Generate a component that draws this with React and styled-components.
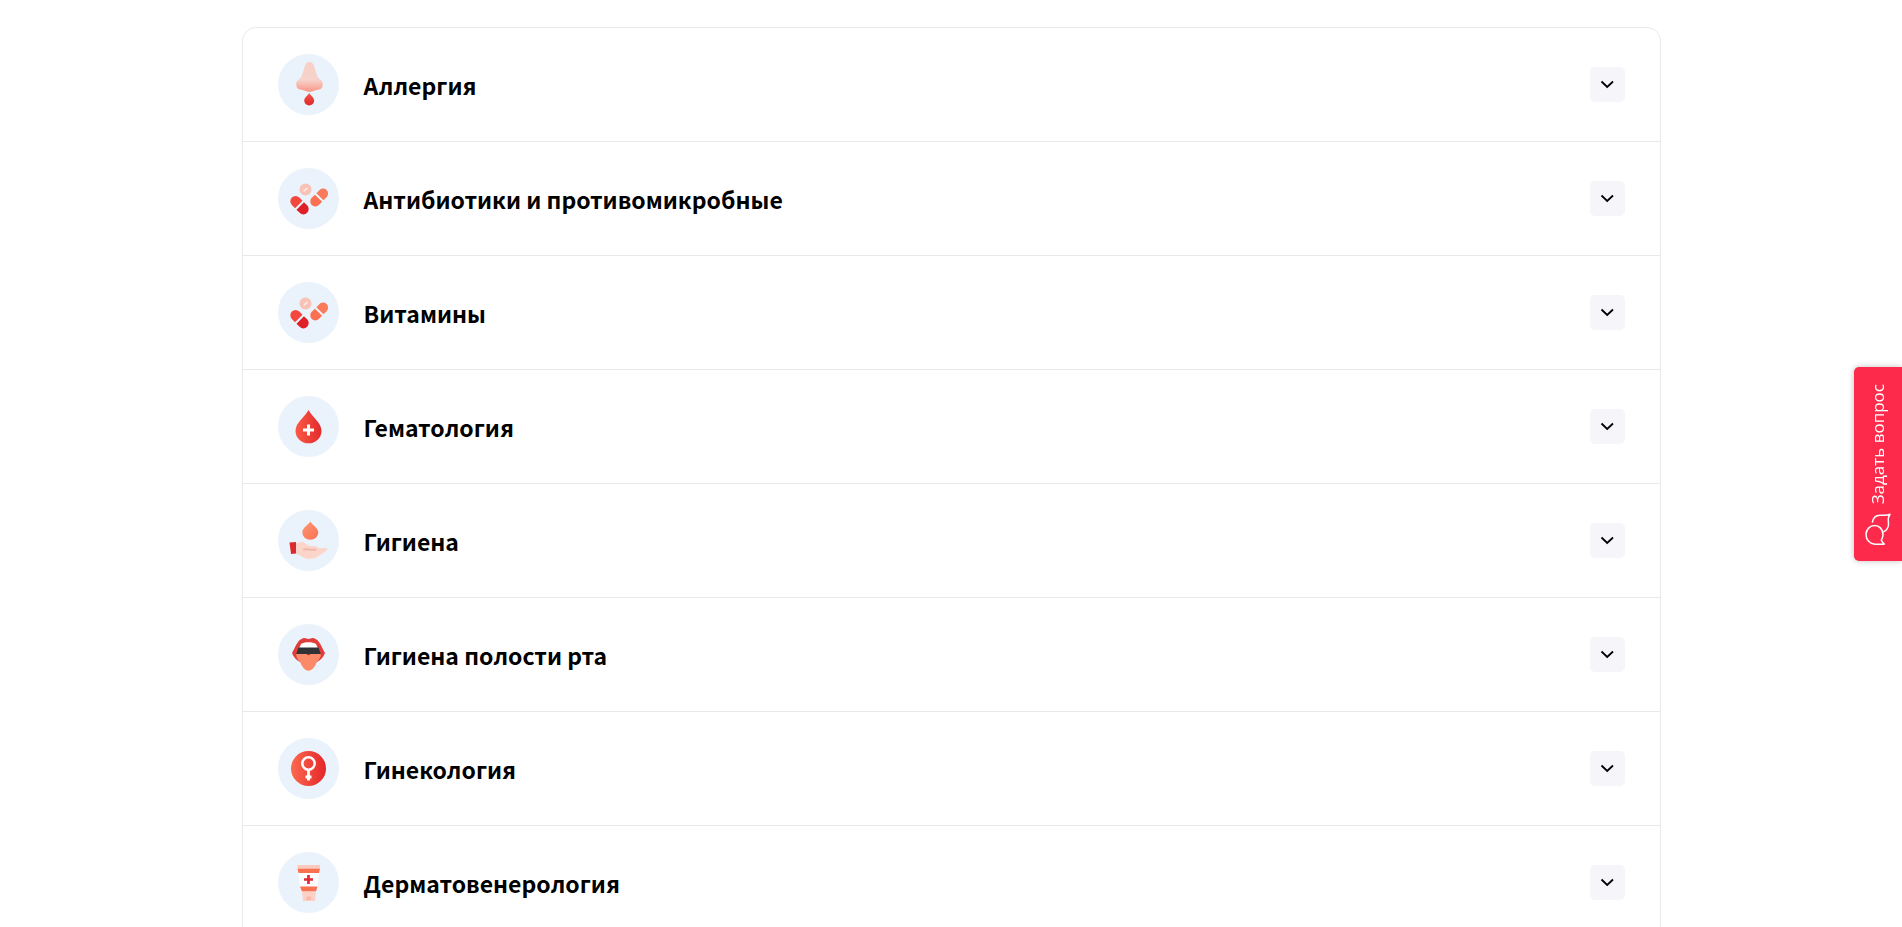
import { useState } from "react";
import styled, { createGlobalStyle } from "styled-components";

function AllergyIcon() {
  return (
    <svg viewBox="0 0 77 77" aria-hidden="true">
      <defs>
        <linearGradient id="nose" x1="0" y1="0" x2="0" y2="1">
          <stop offset="0" stopColor="#f8cfc6" />
          <stop offset="0.6" stopColor="#f6d3cb" />
          <stop offset="1" stopColor="#fb9484" />
        </linearGradient>
        <linearGradient id="noseDrop" x1="0" y1="0" x2="0" y2="1">
          <stop offset="0" stopColor="#f5524a" />
          <stop offset="1" stopColor="#dc2a2a" />
        </linearGradient>
      </defs>
      <path
        fill="url(#nose)"
        d="M39.500 16C36 16 35 19.500 34 23C32.500 28 31.500 32 28.500 33.500C25 36 25.500 43 30 43.500C33.500 43.500 36 46 39.500 46C43 46 45.500 43.500 49 43.500C53.500 43 54 36 50.500 33.500C47.500 32 46.500 28 45 23C44 19.500 43 16 39.500 16Z"
      />
      <path fill="url(#noseDrop)" d="M39.200 47C38 49.500 34.200 51.500 34.200 54.500A5 5 0 0 0 44.200 54.500C44.200 51.500 40.500 49.500 39.200 47Z" />
    </svg>
  );
}

function PillsIcon() {
  return (
    <svg viewBox="0 0 77 77" aria-hidden="true">
      <circle cx="35.500" cy="29.500" r="6" fill="#f8c3b6" />
      <path d="M34 31L37 28.500" stroke="#fff0eb" strokeWidth="1.500" strokeLinecap="round" />
      <g transform="translate(29.500 45.200) rotate(45)">
        <path d="M-1 -5.300H-5.500A5.300 5.300 0 0 0 -5.500 5.300H-1Z" fill="#f4483f" />
        <path d="M1 -5.300H5.500A5.300 5.300 0 0 1 5.500 5.300H1Z" fill="#df2029" />
      </g>
      <g transform="translate(49.200 37.500) rotate(-45)">
        <path d="M-1 -5H-5.500A5 5 0 0 0 -5.500 5H-1Z" fill="#fb6f52" />
        <path d="M1 -5H5.500A5 5 0 0 1 5.500 5H1Z" fill="#fb7a5b" />
      </g>
    </svg>
  );
}

function BloodIcon() {
  return (
    <svg viewBox="0 0 77 77" aria-hidden="true">
      <defs>
        <linearGradient id="blood" x1="0" y1="0" x2="1" y2="0">
          <stop offset="0" stopColor="#fb5a46" />
          <stop offset="1" stopColor="#e22a2c" />
        </linearGradient>
      </defs>
      <path fill="url(#blood)" d="M38.500 22C35 29 25.500 34.500 25.500 43A13 12.300 0 0 0 51.500 43C51.500 34.500 42 29 38.500 22Z" />
      <path d="M38.500 36.500V47.500M33 42H44" stroke="#fff" strokeWidth="3" />
    </svg>
  );
}

function HygieneIcon() {
  return (
    <svg viewBox="0 0 77 77" aria-hidden="true">
      <defs>
        <linearGradient id="water" x1="0" y1="0" x2="1" y2="1">
          <stop offset="0" stopColor="#fb9775" />
          <stop offset="1" stopColor="#fa7250" />
        </linearGradient>
      </defs>
      <path fill="url(#water)" d="M40.300 19.500C38.500 23 32.300 25.500 32.300 30.500A8 7.300 0 0 0 48.300 30.500C48.300 25.500 42 23 40.300 19.500Z" />
      <path
        fill="#fbd5c9"
        d="M26 41L32 39.800C35 40 37 43.500 40 44H44C47 44 47.500 46 50 46.300L56.500 46C58.500 47 56 49 53 51C49 54 45 56.700 41 56.700H37C33 56 30 52.500 26 52Z"
      />
      <path d="M34 47.500C37 46.500 42 48.500 45.500 47.500" fill="none" stroke="#efb7aa" strokeWidth="2" strokeLinecap="round" />
      <path fill="#dc2b2f" d="M19.500 40.500L26 40V51.500L21 52Z" />
    </svg>
  );
}

function MouthIcon() {
  return (
    <svg viewBox="0 0 77 77" aria-hidden="true">
      <path
        fill="#e33d3b"
        d="M33 22.200C35.500 21.500 37 23 38.500 23C40 23 41.500 21.500 44 22.200C50 24 52 32 55 37C53.500 41 51 44 47 46L38.500 49L30 46C26 44 23.500 41 22 37C25 32 27 24 33 22.200Z"
      />
      <path fill="#fff" d="M31 28C34 25.500 43 25.500 46 28L48 32.500H29Z" />
      <path fill="#303235" d="M28.500 31.500H48.500L51 38.500H26Z" />
      <path
        fill="#fc8a69"
        d="M26 38H36.500L38.500 39.500L40.500 38H51C50.500 42 49 44 46.500 46.500C45 51 42 54.700 38.500 54.700C35 54.700 32 51 30.500 46.500C28 44 26.500 42 26 38Z"
      />
    </svg>
  );
}

function GynecologyIcon() {
  return (
    <svg viewBox="0 0 77 77" aria-hidden="true">
      <defs>
        <linearGradient id="disc" x1="0" y1="0" x2="1" y2="0">
          <stop offset="0" stopColor="#fc6a4f" />
          <stop offset="1" stopColor="#e4262a" />
        </linearGradient>
      </defs>
      <circle cx="38.500" cy="38.500" r="17.500" fill="url(#disc)" />
      <circle cx="38.500" cy="33.500" r="6.200" fill="none" stroke="#fff" strokeWidth="2.500" />
      <path d="M38.500 39.700V50.500M35.500 47H41.500" stroke="#fff" strokeWidth="2.800" />
    </svg>
  );
}

function CreamIcon() {
  return (
    <svg viewBox="0 0 77 77" aria-hidden="true">
      <path fill="#fbc9bd" d="M27.500 21H50L49.500 26H28Z" />
      <path fill="#fff" d="M28.500 28.500H49L47.500 43.500H30Z" />
      <path fill="#f9714f" d="M27.500 24.700H50L49 29H28.500ZM30 42.500H47.500L46 47.500H32Z" />
      <path fill="#fbd0c5" d="M32 47.500H46L45 57H33Z" />
      <path fill="#f8b9ac" d="M36.500 52.500H41V56H36.500Z" />
      <path d="M38.500 31V40M34 35.500H43" stroke="#df2b35" strokeWidth="2.700" />
    </svg>
  );
}

const categories = [
  { id: 1, title: "Аллергия", icon: <AllergyIcon /> },
  { id: 2, title: "Антибиотики и противомикробные", icon: <PillsIcon /> },
  { id: 3, title: "Витамины", icon: <PillsIcon /> },
  { id: 4, title: "Гематология", icon: <BloodIcon /> },
  { id: 5, title: "Гигиена", icon: <HygieneIcon /> },
  { id: 6, title: "Гигиена полости рта", icon: <MouthIcon /> },
  { id: 7, title: "Гинекология", icon: <GynecologyIcon /> },
  { id: 8, title: "Дерматовенерология", icon: <CreamIcon /> }
];

function App() {
  const [openId, setOpenId] = useState(null);

  return (
    <>
      <GlobalStyle />
      <Page>
        <List>
          {categories.map(({ id, title, icon }) => (
            <Row key={id}>
              <IconCircle>{icon}</IconCircle>
              <Title id={`category-${id}`}>{title}</Title>
              <Toggle
                type="button"
                aria-labelledby={`category-${id}`}
                aria-expanded={openId === id}
                $open={openId === id}
                onClick={() => setOpenId(openId === id ? null : id)}
              >
                <svg viewBox="0 0 14 10" aria-hidden="true">
                  <path d="M1.500 1.500L7.200 7L13 1.500" />
                </svg>
              </Toggle>
            </Row>
          ))}
        </List>
      </Page>
      <AskButton type="button">
        <svg viewBox="0 0 26 32" aria-hidden="true">
          <path d="M7.300 9.700C8 5 11 2.200 15 2.200C19 2.200 21 3 25 1.300C22 5 23.700 8 23.500 12C23 15.500 21.500 17.500 18.500 18.700" />
          <path d="M19.300 31C16 31.500 13 31.300 10 31.300C5 31 1 27 1 21.500C1 16.500 5 12.500 9.500 12.500C14.500 12.500 18 16.500 18 21.500C18 24 17 26 16.300 27.300C17 29 18 30 19.300 31Z" />
        </svg>
        <span>Задать вопрос</span>
      </AskButton>
    </>
  );
}

const GlobalStyle = createGlobalStyle`
  * {
    box-sizing: border-box;
  }
  body {
    margin: 0;
    background: #fff;
    color: #000;
    font-family: "Noto Sans CJK SC", "Noto Sans", sans-serif;
  }
`;

const Page = styled.main`
  height: 100vh;
  overflow: hidden;
  padding: 27px 24px 0;
`;

const List = styled.ul`
  max-width: 1419px;
  margin: 0 auto;
  padding: 0;
  list-style: none;
  border: 1px solid #e9e9e9;
  border-radius: 14px;
`;

const Row = styled.li`
  display: flex;
  align-items: center;
  gap: 25px;
  padding: 26px 35px;
  & + & {
    border-top: 1px solid #e9e9e9;
  }
`;

const IconCircle = styled.span`
  flex: none;
  width: 61px;
  height: 61px;
  border-radius: 50%;
  background: #eaf3fb;
  svg {
    display: block;
    width: 77px;
    height: 77px;
    margin: -8px;
  }
`;

const Title = styled.h2`
  flex: 1;
  margin: 0;
  font-size: 23px;
  font-weight: 700;
  line-height: 32px;
`;

const Toggle = styled.button`
  display: grid;
  place-items: center;
  width: 35px;
  height: 35px;
  padding: 0;
  border: 0;
  border-radius: 5px;
  background: #f5f5fa;
  cursor: pointer;
  svg {
    width: 14px;
    height: 10px;
    fill: none;
    stroke: #000;
    stroke-width: 1.8;
    transform: ${({ $open }) => ($open ? "rotate(180deg)" : "none")};
  }
`;

const AskButton = styled.button`
  position: fixed;
  top: 367px;
  right: 0;
  display: flex;
  flex-direction: column-reverse;
  align-items: center;
  gap: 9px;
  width: 48px;
  padding: 17px 0 16px;
  border: 0;
  border-radius: 5px 0 0 5px;
  background: #fd2a4b;
  box-shadow: 0 0 6px rgba(0, 0, 0, 0.25);
  color: #fff;
  font-family: "Open Sans", sans-serif;
  font-size: 17px;
  line-height: 24px;
  cursor: pointer;
  span {
    writing-mode: vertical-rl;
    transform: rotate(180deg);
  }
  svg {
    width: 26px;
    height: 32px;
    fill: none;
    stroke: #fff;
    stroke-width: 1.5;
    stroke-linejoin: round;
  }
`;

export default App;
